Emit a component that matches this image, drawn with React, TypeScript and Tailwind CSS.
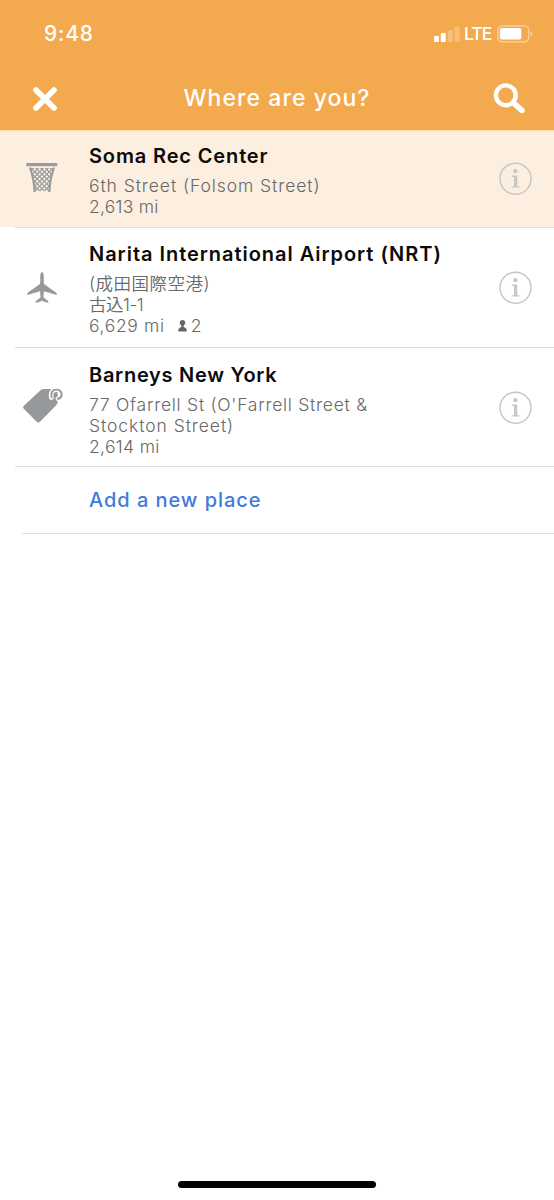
import React from 'react'

interface Place {
  name: string
  nameClass: string
  lines: { text: string; className: string }[]
  distance: string
  distanceClass: string
  people?: number
  icon: React.ReactNode
  rowClass: string
}

const HoopIcon = () => (
  <svg className="mb-[2px]" width="32" height="30" viewBox="0 0 32 30" fill="none" stroke="#999b9d">
    <clipPath id="net">
      <path d="M4 5H28C25.3 12 23.4 19 23.2 28H8.8C8.6 19 6.7 12 4 5Z" />
    </clipPath>
    <path d="M0.3 1.6H31.3" strokeWidth="3.2" />
    <path d="M4 4.5C6.5 12 8.4 19 8.6 29M28 4.5C25.5 12 23.6 19 23.4 29" strokeWidth="2.1" />
    <g clipPath="url(#net)" strokeWidth="1.2">
      {[-24, -19.2, -14.4, -9.6, -4.8, 0, 4.8, 9.6, 14.4, 19.2, 24].map((x) => (
        <path key={x} d={`M${x + 4} 4l26 26M${28 - x} 4l-26 26`} />
      ))}
    </g>
  </svg>
)

const PlaneIcon = () => (
  <svg className="mr-[1px]" width="30" height="32" viewBox="0 0 30 32" fill="#96999b">
    <path d="M15 0C13.8 0 13.2 2.5 13.2 5V11.2C12.8 12.3 11.5 13 10.2 13.9L1.4 20.2C.4 21 .1 21.8.2 22.9L13.1 19.2C13.2 21.2 13.4 23.6 13.7 25.3L9.2 28.8C8.7 29.3 8.5 30 8.6 30.9L14.2 29.2C14.6 29 14.7 28.3 15 28.3S15.4 29 15.8 29.2L21.4 30.9C21.5 30 21.3 29.3 20.8 28.8L16.3 25.3C16.6 23.6 16.8 21.2 16.9 19.2L29.8 22.9C29.9 21.8 29.6 21 28.6 20.2L19.8 13.9C18.5 13 17.2 12.3 16.8 11.2V5C16.8 2.5 16.2 0 15 0Z" />
  </svg>
)

const TagIcon = () => (
  <svg className="mb-[3px] ml-[2px]" width="40" height="36" viewBox="0 0 40 36" fill="none">
    <path
      d="M18 1.8Q19.4.9 21 .9H31.5Q34.7.9 34.7 4V13.5Q34.7 15.5 33.4 16.9L17 33.7Q15.4 35.3 13.7 33.8L.8 20.7Q-.6 19.2.9 17.7Z"
      fill="#96999b"
    />
    <path d="M28.4 9.6C27.2 5.2 29.3 1.8 33.2 1.8C37 1.8 38.8 4.4 38.5 7C38.2 9.2 36.7 10.6 34.8 10.8" stroke="white" strokeWidth="4.6" strokeLinecap="round" />
    <path d="M28.6 9.3C27.4 5.2 29.3 1.6 33.2 1.6C37 1.6 38.9 4.2 38.6 7C38.3 9.2 36.9 10.6 34.8 10.8" stroke="#96999b" strokeWidth="1.9" strokeLinecap="round" />
  </svg>
)

const InfoIcon = () => (
  <svg className="shrink-0" width="33" height="33" viewBox="0 0 33 33" fill="none">
    <circle cx="16.5" cy="16.7" r="15.5" stroke="#c9c7c5" strokeWidth="1.5" />
    <circle cx="16.4" cy="9.2" r="2.1" fill="#c9c7c5" />
    <path d="M12.9 13.6H18.3V24.2H20.5V25.6H12.7V24.2H15V15H12.9Z" fill="#c9c7c5" />
  </svg>
)

const PersonIcon = () => (
  <svg className="ml-[13px] mr-[4px]" width="9" height="12" viewBox="0 0 9 12" fill="#666">
    <circle cx="4.5" cy="2.8" r="2.7" />
    <path d="M3.3 5H5.7V6.9C7.4 7.4 8.7 8.4 8.7 10V11.6H.3V10C.3 8.4 1.6 7.4 3.3 6.9Z" />
  </svg>
)

const places: Place[] = [
  {
    name: 'Soma Rec Center',
    nameClass: 'tracking-[0.86px]',
    lines: [{ text: '6th Street (Folsom Street)', className: 'tracking-[0.93px]' }],
    distance: '2,613 mi',
    distanceClass: 'tracking-[0.25px]',
    icon: <HoopIcon />,
    rowClass: 'h-[97px] border-t border-[#ffe0b4] bg-[#fcefdf] pt-[11px]',
  },
  {
    name: 'Narita International Airport (NRT)',
    nameClass: 'tracking-[0.96px]',
    lines: [
      { text: '(成田国際空港)', className: 'tracking-[0.5px]' },
      { text: '古込1-1', className: 'tracking-[-0.5px]' },
    ],
    distance: '6,629 mi',
    distanceClass: 'tracking-[0.65px]',
    people: 2,
    icon: <PlaneIcon />,
    rowClass: 'h-[119px] pt-[12px]',
  },
  {
    name: 'Barneys New York',
    nameClass: 'tracking-[0.72px]',
    lines: [
      { text: "77 Ofarrell St (O'Farrell Street &", className: 'tracking-[0.74px]' },
      { text: 'Stockton Street)', className: 'tracking-[0.94px]' },
    ],
    distance: '2,614 mi',
    distanceClass: 'tracking-[0.35px]',
    icon: <TagIcon />,
    rowClass: 'h-[118px] pt-[13px]',
  },
]

const StatusBar = () => (
  <div className="flex h-[68px] items-center justify-between pl-[44px] pr-[21px] text-white">
    <span className="text-[21px] font-medium tracking-[0.8px]">9:48</span>
    <div className="flex items-center">
      <svg width="26" height="17" viewBox="0 0 26 17" fill="white">
        <rect x="0" y="10" width="5" height="6" rx="1" />
        <rect x="6.8" y="7" width="5" height="9" rx="1" />
        <rect x="13.8" y="4" width="5" height="12" rx="1" opacity=".25" />
        <rect x="20.5" y="1" width="5" height="15" rx="1" opacity=".25" />
      </svg>
      <span className="ml-[4px] w-[28px] text-[17.5px] font-medium tracking-[-1px]">LTE</span>
      <svg className="ml-[5px]" width="36" height="18" viewBox="0 0 36 18" fill="none">
        <rect x=".8" y=".8" width="31" height="16" rx="4.5" stroke="white" strokeOpacity=".5" strokeWidth="1.3" />
        <rect x="2.8" y="3" width="21.5" height="11.6" rx="2" fill="white" />
        <path d="M33.6 6.2C36 7.2 36 10.4 33.6 11.4Z" fill="white" fillOpacity=".5" />
      </svg>
    </div>
  </div>
)

const NavBar = () => (
  <div className="flex h-[62px] items-center justify-between pb-px pl-[32px] pr-[28px] text-white">
    <button aria-label="Close">
      <svg width="26" height="26" viewBox="0 0 26 26" fill="none">
        <path d="M4 4L22 22M22 4L4 22" stroke="white" strokeWidth="5.6" strokeLinecap="round" />
      </svg>
    </button>
    <h1 className="pl-[3px] text-[23px] font-medium tracking-[1.05px]">Where are you?</h1>
    <button aria-label="Search">
      <svg width="33" height="31" viewBox="0 0 33 31" fill="none" stroke="white">
        <circle cx="12.8" cy="12.3" r="9.9" strokeWidth="4.4" />
        <path d="M20.5 19.8L28.9 27.3" strokeWidth="5.6" strokeLinecap="round" />
      </svg>
    </button>
  </div>
)

const PlaceRow: React.FC<{ place: Place }> = ({ place }) => (
  <li>
    <div className={`flex ${place.rowClass}`}>
      <div className="-mt-[12px] flex w-[89px] shrink-0 items-center pr-[5px]">
        <div className="flex w-[84px] justify-center">{place.icon}</div>
      </div>
      <div className="flex-1 whitespace-nowrap">
        <h2 className={`text-[20px] leading-[28px] font-semibold text-[#0b0b0b] ${place.nameClass}`}>{place.name}</h2>
        <div className="mt-[5px] text-[17.5px] leading-[21px] font-[350] text-[#686868]">
          {place.lines.map((line) => (
            <p key={line.text} className={line.className}>{line.text}</p>
          ))}
          <p className={`flex items-center ${place.distanceClass}`}>
            {place.distance}
            {place.people && (
              <>
                <PersonIcon />
                {place.people}
              </>
            )}
          </p>
        </div>
      </div>
      <button aria-label="Info" className="-mt-[12px] mr-[22px] flex items-center">
        <InfoIcon />
      </button>
    </div>
    <div className="ml-[15px] h-px bg-[#dddddd]" />
  </li>
)

const App: React.FC = () => {
  return (
    <div className="flex h-[1200px] w-[554px] flex-col overflow-hidden bg-white font-['Inter','Noto_Sans_CJK_JP',sans-serif]">
      <header className="bg-[#f3aa4e]">
        <StatusBar />
        <NavBar />
      </header>

      <ul>
        {places.map((place) => (
          <PlaceRow key={place.name} place={place} />
        ))}
      </ul>

      <button className="flex h-[66px] items-center pl-[89px] text-[20px] font-medium tracking-[0.95px] text-[#3f7bdb]">
        Add a new place
      </button>
      <div className="ml-[22px] h-px shrink-0 bg-[#dddddd]" />

      {/* Home indicator */}
      <div className="mx-auto mt-auto mb-[12px] h-[7px] w-[198px] rounded-full bg-black" />
    </div>
  )
}

export default App
